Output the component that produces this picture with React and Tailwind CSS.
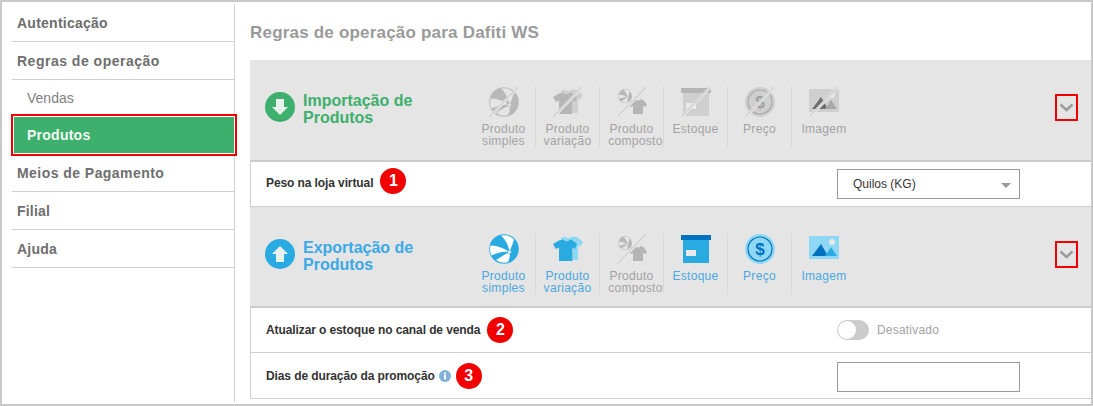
function Slash() {
  return (
    <g>
      <line x1="0.5" y1="30" x2="29.5" y2="0" stroke="#e5e5e5" strokeWidth="3" />
      <line x1="0.5" y1="29.5" x2="29" y2="0" stroke="#c2c2c2" strokeWidth="1" />
    </g>
  );
}

function BallShape({ color, gap }) {
  return (
    <g>
      <circle cx="15" cy="15" r="14.8" fill={color} />
      <path d="M20.5 18 Q19 8 12 1.6 A13.6 13.6 0 0 1 25 5.5 Q23 12 20.5 18 Z" fill={gap} />
      <path d="M20.5 18 Q10 11 1.6 11.5 A13.6 13.6 0 0 0 2.6 21.5 Q12 16.5 20.5 18 Z" fill={gap} />
      <path d="M20.5 18 Q13 22 7 26 A13.6 13.6 0 0 0 19 28 Q21.5 24 20.5 18 Z" fill={gap} />
      <circle cx="20.5" cy="18" r="1.8" fill={gap} stroke={color} strokeWidth="0.6" />
    </g>
  );
}

function Ball({ off }) {
  return (
    <svg width="30" height="30" viewBox="0 0 30 30" className="overflow-visible">
      <BallShape color={off ? "#b8b8b8" : "#29abe2"} gap={off ? "#e5e5e5" : "#fff"} />
      {off && <Slash />}
    </svg>
  );
}

function Shirt({ off }) {
  const back = off ? "#cfcfcf" : "#8fd8f5";
  const front = off ? "#b5b5b5" : "#29abe2";
  return (
    <svg width="30" height="30" viewBox="0 0 30 30" className="overflow-visible">
      <path d="M8 4 L12 2.5 Q16 6 19 2.5 L24 3 L30 8 L27 13 L25 11 V26 H20 V8 H8 Z" fill={back} />
      <path d="M6 6.5 L10 5.5 Q14 9.5 17 5.5 L19 6 L24 10 L22 15 L19.5 13.5 V27 H6 V13.5 L3 15 L0 10 Z" fill={front} />
      {off && <Slash />}
    </svg>
  );
}

function Combo() {
  return (
    <svg width="30" height="30" viewBox="0 0 30 30" className="overflow-visible">
      <g transform="translate(1 2) scale(0.47)">
        <BallShape color="#b8b8b8" gap="#e5e5e5" />
      </g>
      <path d="M14 13.5 L18 12 Q21 15 24 12 L27 13.5 L30 18 L28 20 L26 19 V27 H16 V19 L14 20 L12 18 Z" fill="#b5b5b5" />
      <Slash />
    </svg>
  );
}

function Box({ off }) {
  return (
    <svg width="30" height="30" viewBox="0 0 30 30" className="overflow-visible">
      <rect x="0" y="1" width="30" height="5" fill={off ? "#b5b5b5" : "#0071bc"} />
      <rect x="2" y="6" width="26" height="23" fill={off ? "#cfcfcf" : "#29abe2"} />
      <rect x="5" y="16" width="10" height="6" fill="#e8e8e8" />
      {off && <Slash />}
    </svg>
  );
}

function Coin({ off }) {
  return (
    <svg width="30" height="30" viewBox="0 0 30 30" className="overflow-visible">
      <circle cx="15" cy="15" r="15" fill={off ? "#cfcfcf" : "#8fd8f5"} />
      <circle cx="15" cy="15" r="12" fill={off ? "#cfcfcf" : "#8fd8f5"} stroke={off ? "#a8a8a8" : "#0071bc"} strokeWidth="1.2" />
      <text x="15" y="21" textAnchor="middle" fontSize="17" fontWeight="700" fontFamily="'Liberation Sans', sans-serif" fill={off ? "#a0a0a0" : "#0071bc"}>$</text>
      {off && <Slash />}
    </svg>
  );
}

function Picture({ off }) {
  return (
    <svg width="30" height="30" viewBox="0 0 30 30" className="overflow-visible">
      <rect x="0" y="2" width="30" height="23" fill={off ? "#cfcfcf" : "#8fd8f5"} />
      <circle cx="23" cy="8" r="3" fill="#e8e8e8" />
      <path d="M3 22 L12 10 L19 22 Z" fill={off ? "#6e6e6e" : "#0071bc"} />
      <path d="M16 22 L22 13 L28 22 Z" fill={off ? "#a8a8a8" : "#29abe2"} />
      {off && <Slash />}
    </svg>
  );
}

function Feature({ icon, lines, off, last, push }) {
  return (
    <div className={`flex h-[60px] w-16 flex-col items-center ${last ? "" : "border-r border-[#d8d8d8]"}`}>
      <div className="flex h-[36px] w-[30px] shrink-0 justify-center">{icon}</div>
      <div className={`whitespace-nowrap text-center text-xs leading-3 tracking-[0.3px] ${off ? "text-[#a3a3a3]" : "text-[#4aa8e0]"}`}>
        <div>{lines[0]}</div>
        {lines[1] && <div className={push ? "pl-2" : ""}>{lines[1]}</div>}
      </div>
    </div>
  );
}

function Panel({ title, color, arrow, icons, height }) {
  return (
    <div className={`flex ${height} items-start bg-[#e5e5e5] pl-[15px]`}>
      <div className={`flex w-[207px] shrink-0 items-start gap-2 pt-[32px] ${color} text-base font-bold leading-[17px]`}>
        {arrow}
        <div>
          {title}
          <br />
          Produtos
        </div>
      </div>
      <div className="flex pt-[27px]">{icons}</div>
      <div className="ml-auto mr-[13px] mt-[34px] flex h-[27px] w-[23px] items-center justify-center border-2 border-[#f00000]">
        <svg width="15" height="9" viewBox="0 0 15 9">
          <path d="M1.5 1.5 L7.5 7 L13.5 1.5" fill="none" stroke="#9a9a9a" strokeWidth="2.4" />
        </svg>
      </div>
    </div>
  );
}

function ArrowCircle({ up, fill }) {
  return (
    <svg width="30" height="30" viewBox="0 0 30 30" className="shrink-0">
      <circle cx="15" cy="15" r="15" fill={fill} />
      <path
        d={up ? "M15 7 L23 15 H19 V23 H11 V15 H7 Z" : "M15 23 L23 15 H19 V7 H11 V15 H7 Z"}
        fill="#e8f1ec"
      />
    </svg>
  );
}

function Badge({ n, className = "" }) {
  return (
    <span className={`flex h-[26px] w-[26px] items-center justify-center rounded-full bg-[#f00000] text-base font-bold text-white ${className}`}>
      {n}
    </span>
  );
}

function Row({ children, right, height = "h-[45px]" }) {
  return (
    <div className={`flex ${height} items-center justify-between border-b border-l border-[#d0d0d0] pl-[15px] pr-[71px]`}>
      <div className="flex items-center text-xs font-bold tracking-[-0.1px] text-[#333]">{children}</div>
      <div className="w-[183px]">{right}</div>
    </div>
  );
}

function MenuItem({ label, tracking }) {
  return (
    <div className={`flex h-[38px] items-center border-b border-[#d0d0d0] pl-[5px] text-sm font-bold text-[#6e6e6e] ${tracking}`}>
      {label}
    </div>
  );
}

export default function App() {
  return (
    <div className="flex h-[406px] w-[1093px] border-2 border-[#c8c8c8] bg-white font-['Liberation_Sans',Arial,sans-serif]">
      <aside className="w-[233px] shrink-0 pl-[10px] pt-[2px]">
        <div className="h-[398px] border-r border-[#d0d0d0]">
          <MenuItem label="Autenticação" tracking="tracking-[0.25px]" />
          <MenuItem label="Regras de operação" tracking="tracking-[0.5px]" />
          <div className="flex h-[34px] items-center pl-[15px] pt-[2px] text-sm text-[#808080]">Vendas</div>
          <div className="-mb-[2px] -ml-[1px] -mr-[3px] flex h-[42px] items-center border-2 border-[#f00000] bg-[#3cb06c] pl-[14px] text-sm font-bold tracking-[0.25px] text-[#f3f7f3] shadow-[inset_0_0_0_1px_#fff]">
            Produtos
          </div>
          <MenuItem label="Meios de Pagamento" tracking="tracking-[0.45px]" />
          <MenuItem label="Filial" tracking="tracking-[0.2px]" />
          <MenuItem label="Ajuda" tracking="tracking-[0.2px]" />
        </div>
      </aside>

      <main className="min-w-0 flex-1 pl-[15px]">
        <h1 className="flex h-[58px] items-center pt-[4px] text-[17px] font-bold tracking-[0.2px] text-[#9a9a9a]">
          Regras de operação para Dafiti WS
        </h1>
        <Panel
          height="h-[100px]"
          title="Importação de"
          color="text-[#3cb06c]"
          arrow={<ArrowCircle fill="#3cb06c" />}
          icons={
            <>
              <Feature off icon={<Ball off />} lines={["Produto", "simples"]} />
              <Feature off icon={<Shirt off />} lines={["Produto", "variação"]} />
              <Feature off push icon={<Combo />} lines={["Produto", "composto"]} />
              <Feature off icon={<Box off />} lines={["Estoque"]} />
              <Feature off icon={<Coin off />} lines={["Preço"]} />
              <Feature off last icon={<Picture off />} lines={["Imagem"]} />
            </>
          }
        />
        <div className="border-t-2 border-[#ccc]">
          <Row
            right={
              <div className="relative flex h-[30px] items-center border border-[#999] pl-[15px] text-xs text-[#333]">
                Quilos (KG)
                <span className="absolute right-[8px] top-[13px] h-0 w-0 border-x-[5px] border-t-[5px] border-x-transparent border-t-[#999]" />
              </div>
            }
          >
            <span className="-mt-[2px] mr-[7px]">Peso na loja virtual</span>
            <Badge n="1" className="-mt-[7px]" />
          </Row>
        </div>
        <Panel
          height="h-[99px]"
          title="Exportação de"
          color="text-[#3ba9e6]"
          arrow={<ArrowCircle up fill="#29abe2" />}
          icons={
            <>
              <Feature icon={<Ball />} lines={["Produto", "simples"]} />
              <Feature icon={<Shirt />} lines={["Produto", "variação"]} />
              <Feature off push icon={<Combo />} lines={["Produto", "composto"]} />
              <Feature icon={<Box />} lines={["Estoque"]} />
              <Feature icon={<Coin />} lines={["Preço"]} />
              <Feature last icon={<Picture />} lines={["Imagem"]} />
            </>
          }
        />
        <div className="border-t-2 border-[#ccc]">
          <Row
            right={
              <div className="flex items-center gap-2">
                <span className="flex h-5 w-8 items-center rounded-full bg-[#ccc] pl-[1px]">
                  <span className="h-[18px] w-[18px] rounded-full bg-white" />
                </span>
                <span className="text-xs tracking-[0.2px] text-[#a3a3a3]">Desativado</span>
              </div>
            }
          >
            <span className="mr-[7px]">Atualizar o estoque no canal de venda</span>
            <Badge n="2" />
          </Row>
          <Row height="h-[46px]" right={<div className="mt-[3px] h-[30px] border border-[#999]" />}>
            <span className="mr-[4px]">Dias de duração da promoção</span>
            <svg width="12" height="12" viewBox="0 0 12 12" className="mr-[5px]">
              <circle cx="6" cy="6" r="6" fill="#7fb2d9" />
              <rect x="5" y="5" width="2" height="4.4" fill="#fff" />
              <rect x="5" y="2.6" width="2" height="1.7" fill="#fff" />
            </svg>
            <Badge n="3" />
          </Row>
        </div>
      </main>
    </div>
  );
}
